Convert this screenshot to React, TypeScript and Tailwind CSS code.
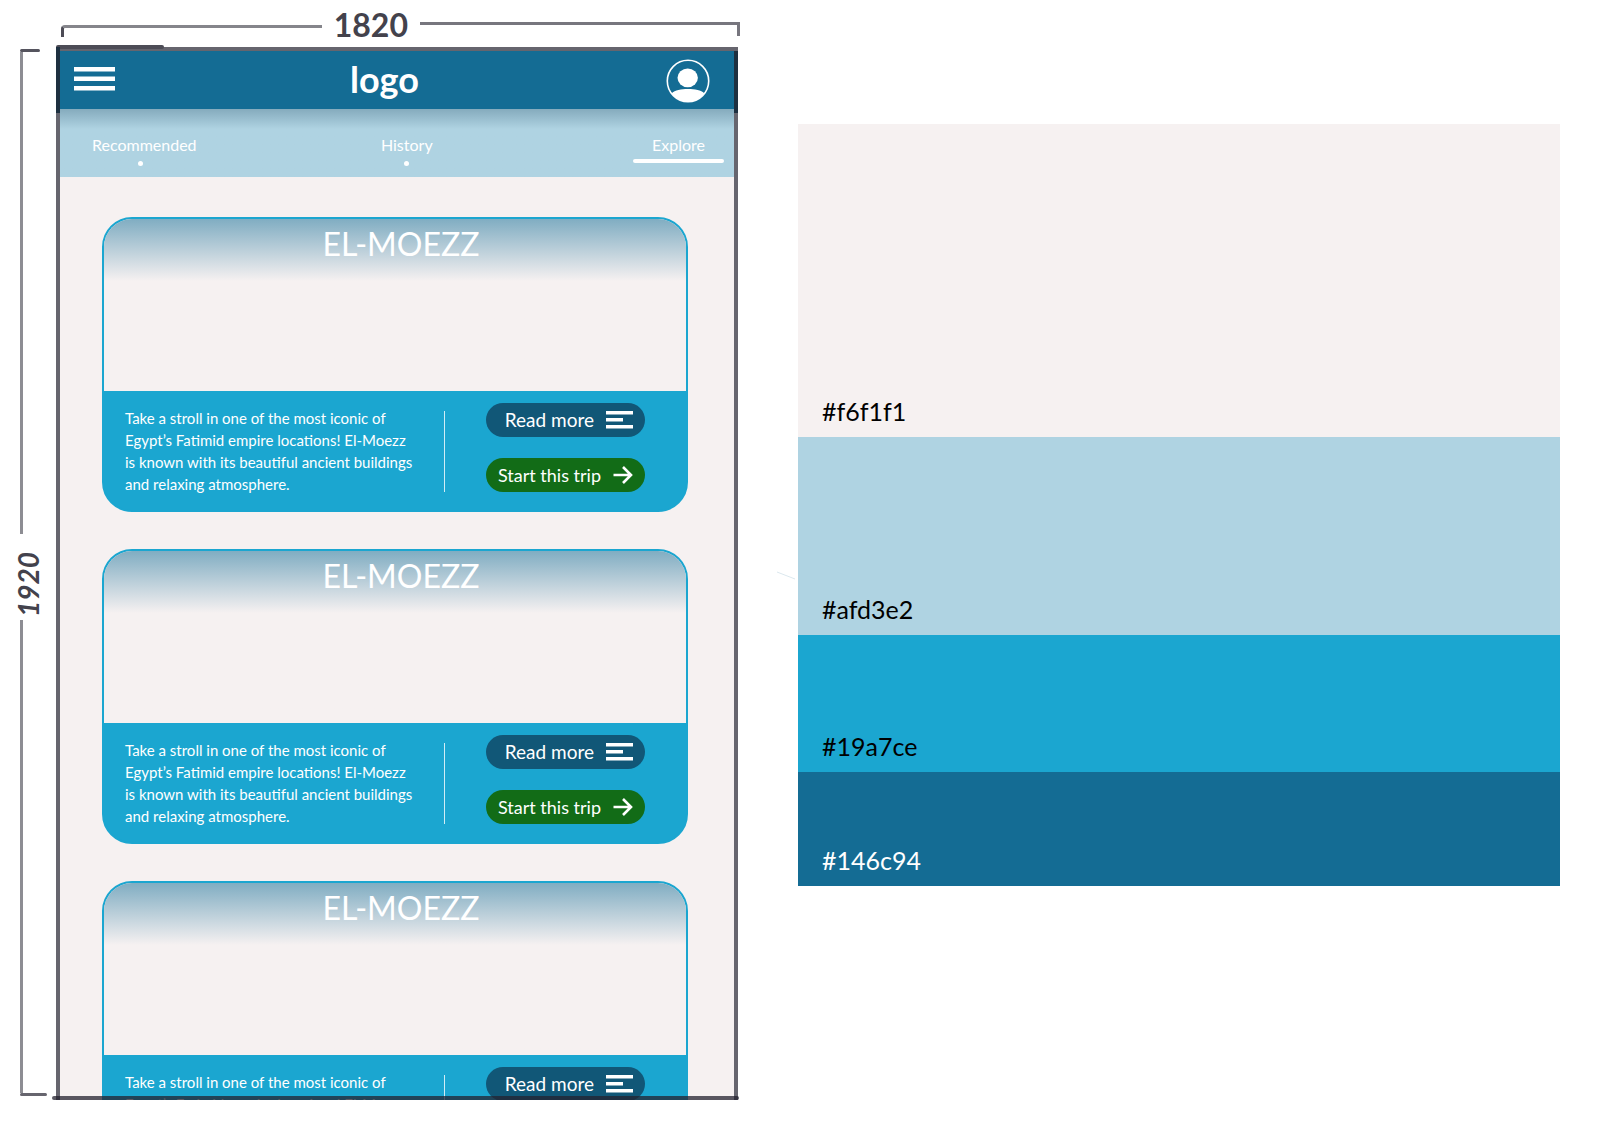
import React from "react";

const swatches = [
  { code: "#f6f1f1", style: "bg-[#f6f1f1] text-black" },
  { code: "#afd3e2", style: "bg-[#afd3e2] text-black" },
  { code: "#19a7ce", style: "bg-[#1ba6d0] text-black" },
  { code: "#146c94", style: "bg-[#146c94] text-white" },
];

function MenuIcon() {
  return (
    <svg width="41" height="24" viewBox="0 0 41 24" fill="#fff" aria-hidden="true">
      <path d="M0 0h41v4.5H0zM0 9.5h41V14H0zM0 19h41v4.5H0z" />
    </svg>
  );
}

function AvatarIcon() {
  return (
    <svg width="44" height="44" viewBox="0 0 44 44" aria-hidden="true">
      <circle cx="22" cy="22" r="20.7" fill="none" stroke="#fff" strokeWidth="1.6" />
      <ellipse cx="21.7" cy="18.8" rx="10.2" ry="9.4" fill="#fff" />
      <path d="M5.5 34.5C9 31 15 30 22 30s13 1 16.5 4.5A20.7 20.7 0 0 1 5.5 34.5Z" fill="#fff" />
    </svg>
  );
}

function LinesIcon() {
  return (
    <svg width="27" height="18" viewBox="0 0 27 18" fill="#fff" aria-hidden="true">
      <path d="M0 0h27v3.5H0zM0 7h17v3.5H0zM0 14h27v3.5H0z" />
    </svg>
  );
}

function ArrowIcon() {
  return (
    <svg width="20" height="18" viewBox="0 0 20 18" fill="none" stroke="#fff" strokeWidth="2.6" aria-hidden="true">
      <path d="M0.5 9H18M10 1l8 8-8 8" />
    </svg>
  );
}

function TripCard() {
  return (
    <article className="shrink-0 overflow-hidden rounded-[30px] border-2 border-[#1ba6d0] bg-[#1ba6d0]">
      <div className="h-[172px] bg-[#f6f1f1] bg-linear-to-b from-[#80adc2] to-[#f6f1f1] to-[62px]">
        <h2 className="pt-1 pl-3 text-center text-[32px] leading-[42px] text-white">EL-MOEZZ</h2>
      </div>
      <div className="flex h-[119px] items-start pt-3 pl-[21px]">
        <p className="w-[304px] shrink-0 pt-1 text-[15px] leading-[22px] text-white">
          Take a stroll in one of the most iconic of
          <br />
          Egypt’s Fatimid empire locations! El-Moezz
          <br />
          is known with its beautiful ancient buildings
          <br />
          and relaxing atmosphere.
        </p>
        <div className="mt-2 ml-[15px] h-[81px] w-px shrink-0 bg-white/80" />
        <div className="flex flex-1 flex-col items-center gap-[21px]">
          <button type="button" className="flex h-[34px] w-[159px] items-center justify-end gap-3 rounded-full bg-[#115777] pr-3 text-[19px] text-white">
            Read more
            <LinesIcon />
          </button>
          <button type="button" className="flex h-[34px] w-[159px] items-center justify-end gap-3 rounded-full bg-[#126c17] pr-3 text-[18px] text-white">
            Start this trip
            <ArrowIcon />
          </button>
        </div>
      </div>
    </article>
  );
}

function Phone() {
  return (
    <div className="relative min-w-0 flex-1">
      <div className="flex h-full flex-col overflow-hidden border-x-4 border-t-4 border-[#66656e] bg-[#f6f1f1]">
        <header className="flex h-[58px] shrink-0 items-center justify-between bg-[#146c94] pt-px pr-6 pl-[14px]">
          <button type="button" aria-label="Menu" className="pb-1">
            <MenuIcon />
          </button>
          <span className="mr-3 pb-1 text-[36px] leading-none font-bold text-white">logo</span>
          <button type="button" aria-label="Profile">
            <AvatarIcon />
          </button>
        </header>
        <nav className="flex h-[68px] shrink-0 items-start justify-between bg-[#afd3e2] bg-linear-to-b from-[#85abbd] to-[#afd3e2] to-[20px] pt-[25px] pr-[10px] pl-8 text-[16px] leading-[22px] text-white">
          <a href="#recommended" className="flex flex-col items-center">
            Recommended
            <span className="mt-[5px] mr-2 size-[5px] rounded-full bg-white" />
          </a>
          <a href="#history" className="mr-4 flex flex-col items-center">
            History
            <span className="mt-[5px] size-[5px] rounded-full bg-white" />
          </a>
          <a href="#explore" className="flex w-[91px] flex-col items-center">
            Explore
            <span className="mt-[3px] h-1 w-full rounded-full bg-white" />
          </a>
        </nav>
        <main className="flex min-h-0 flex-1 flex-col gap-[37px] overflow-hidden pt-10 pr-[46px] pl-[42px]">
          <TripCard />
          <TripCard />
          <TripCard />
        </main>
      </div>
      <div className="absolute -top-[2px] left-0 h-1 w-[108px] rounded-full bg-[#4d4c56]" />
      <div className="absolute top-0 left-0 h-[66px] w-1 bg-[#1e3040]" />
      <div className="absolute top-1 right-0 h-[62px] w-1 bg-[#1e3040]" />
      <div className="absolute -right-px bottom-0 -left-1 h-1 rounded-sm bg-[#24222f]/75" />
    </div>
  );
}

export default function App() {
  return (
    <div className="relative grid h-screen grid-cols-[738fr_762fr] gap-[60px] overflow-hidden bg-white pr-10 font-['Lato',sans-serif]">
      <section className="flex min-h-0 min-w-0 flex-col pb-[42px]">
        <div className="flex h-[47px] shrink-0 items-start pt-[9px] pl-[61px]">
          <div className="mt-4 h-3 flex-1 rounded-tl-sm border-t-[3px] border-l-[3px] border-[#85858b] [border-left-color:#4d4c56]" />
          <div className="px-3 text-[32px] leading-8 font-bold text-[#43424c]">1820</div>
          <div className="-mr-[2px] mt-[13px] h-[14px] w-[320px] border-t-[3px] border-r-[3px] border-[#77767e]" />
        </div>
        <div className="flex min-h-0 flex-1">
          <div className="flex w-14 shrink-0 flex-col pt-[2px]">
            <div className="ml-5 h-[3px] w-5 rounded-full bg-[#55545e]" />
            <div className="ml-5 w-[3px] flex-[484] bg-[#8d8d93]" />
            <div className="mr-auto ml-3 rotate-180 pt-1 pb-[18px] text-[28px] leading-8 font-bold text-[#43424c] italic [writing-mode:vertical-rl]">
              1920
            </div>
            <div className="ml-5 w-[3px] flex-[475] bg-[#8d8d93]" />
            <div className="mb-1 ml-5 h-[3px] w-[27px] rounded-full bg-[#66656e]" />
          </div>
          <Phone />
        </div>
      </section>
      <section
        aria-label="Palette"
        className="mt-[124px] grid aspect-square grid-rows-[313fr_198fr_137fr_114fr] self-start"
      >
        {swatches.map((s) => (
          <div key={s.code} className={`flex items-end pb-[10px] pl-6 text-[25px] leading-8 ${s.style}`}>
            {s.code}
          </div>
        ))}
      </section>
      <svg className="absolute top-[571px] left-[777px]" width="18" height="10" viewBox="0 0 18 10" aria-hidden="true">
        <path d="M0 1 18 8" stroke="#dce8ee" fill="none" />
      </svg>
    </div>
  );
}
